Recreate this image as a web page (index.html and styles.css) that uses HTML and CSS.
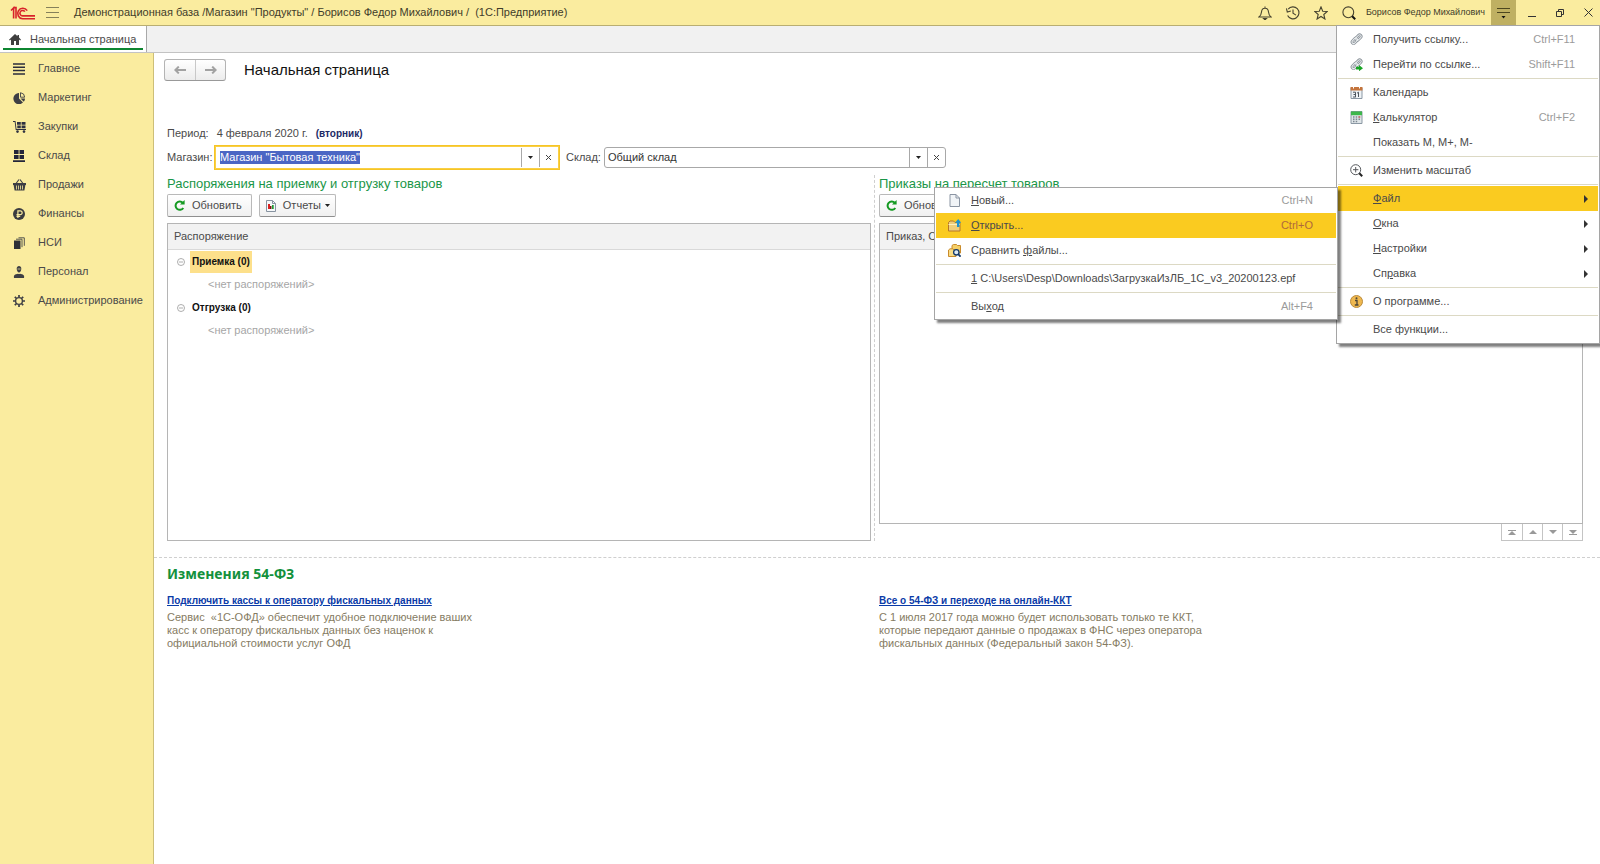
FILE: index.html
```html
<!DOCTYPE html>
<html lang="ru">
<head>
<meta charset="utf-8">
<title>Начальная страница</title>
<link rel="stylesheet" href="styles.css">
</head>
<body>
<div class="app">
  <header class="titlebar">
    <svg class="logo" viewBox="0 0 26 14" width="26" height="14" fill="none" stroke="#d8232a" stroke-width="1.6"><path d="M1 4.5 3.6 2v10.5M3.2 1.6H6v10.9"/><path d="M17.2 4.6A5.2 5.2 0 1 0 12.600 12.700H25"/><path d="M14.800 5.600A2.700 2.700 0 1 0 12.700 9.900H25"/></svg>
    <button class="tbtn burger" type="button" aria-label="Главное меню"><svg viewBox="0 0 13 11" width="13" height="11" stroke="#85805a" stroke-width="1"><path d="M0 .5h13M0 5.500h13M0 10.500h13"/></svg></button>
    <h1 class="app-title">Демонстрационная база /Магазин "Продукты" / Борисов Федор Михайлович /&nbsp; (1С:Предприятие)</h1>
    <div class="tools">
      <button class="tbtn" type="button" aria-label="Уведомления"><svg viewBox="0 0 14 14" width="14" height="14" fill="none" stroke="#46432f" stroke-width="1.1"><path d="M1 11c2-1.500 2.300-3 2.500-5C3.700 3.500 5 2.200 7 2.200s3.300 1.300 3.500 3.800c.2 2 .5 3.500 2.500 5zM7 .4v1.600"/><path d="M5.600 12.500h2.800L7 13.800z" fill="#222"/></svg></button>
      <button class="tbtn" type="button" aria-label="История"><svg viewBox="0 0 14 14" width="14" height="14" fill="none" stroke="#46432f" stroke-width="1.1"><path d="M2.200 3.200A6 6 0 1 1 1.600 9.500"/><path d="M.4 2.300 1.300 6l3.500-1M7 3.500v3.800l3 1.800"/></svg></button>
      <button class="tbtn" type="button" aria-label="Избранное"><svg viewBox="0 0 14 14" width="14" height="14" fill="none" stroke="#46432f" stroke-width="1.100"><path d="M7 .9 8.700 5.200l4.600.3-3.500 3 1.100 4.500L7 10.500 3.100 13l1.100-4.500-3.500-3 4.600-.3z"/></svg></button>
      <button class="tbtn" type="button" aria-label="Поиск"><svg viewBox="0 0 14 14" width="14" height="14" fill="none" stroke="#46432f" stroke-width="1.100"><circle cx="6.300" cy="6.300" r="5.400"/><path d="m10.200 10.200 3 3" stroke="#111" stroke-width="2"/></svg></button>
    </div>
    <span class="user">Борисов Федор Михайлович</span>
    <button class="tbtn service" type="button" aria-label="Сервис и настройки"><svg viewBox="0 0 13 12" width="13" height="12"><path d="M0 1.500h13M0 5.500h13" stroke="#4c461f"/><path d="M4.500 9h4l-2 2.500z" fill="#111"/></svg></button>
    <div class="winbtns">
      <button class="tbtn" type="button" aria-label="Свернуть"><svg viewBox="0 0 8 8" width="8" height="8"><path d="M0 7.500h8" stroke="#333"/></svg></button>
      <button class="tbtn" type="button" aria-label="Восстановить"><svg viewBox="0 0 8 8" width="8" height="8" fill="none" stroke="#333"><path d="M.5 2.500h5v5h-5zM2.500 2.500v-2h5v5h-2"/></svg></button>
      <button class="tbtn" type="button" aria-label="Закрыть"><svg viewBox="0 0 9 9" width="9" height="9" stroke="#333"><path d="m.5.5 8 8M8.500.5l-8 8"/></svg></button>
    </div>
  </header>

  <nav class="tabs">
    <a class="tab" href="#"><svg viewBox="0 0 12 11" width="12" height="11" fill="#3f3f3f"><path d="M6 0 0 5.700l.8.800L2 5.500V11h3V7h2v4h3V5.500l1.200 1 .8-.8L10 3.600V1H8.500v1.200z"/></svg><span class="tab-label">Начальная страница</span></a>
  </nav>

  <div class="body">
    <nav class="sidebar">
      <a class="side" href="#"><svg viewBox="0 0 12 12" width="12" height="12" stroke="#2b2d3c" stroke-width="1.500"><path d="M0 1h12M0 4.300h12M0 7.600h12M0 11h12"/></svg>Главное</a>
      <a class="side" href="#"><svg viewBox="0 0 12 12" width="12" height="12" fill="#3e3f44"><path d="M6 1v5.500l4 4A5.600 5.600 0 1 1 6 1z"/><path d="M7.500.7v4.500h4.200A4.700 4.700 0 0 0 7.500.7z" fill="none" stroke="#3e3f44" stroke-width=".9"/><path d="M7.500 6.500H12c0 1.300-.4 2.300-1.200 3.300z"/></svg>Маркетинг</a>
      <a class="side" href="#"><svg viewBox="0 0 13 12" width="13" height="12" fill="#2f3140"><path d="M0 0h2.500l1 8H13v1H2.700L1.700 1H0zM4 1h3.800v2.800H4zM8.600 1h3.900v2.800H8.600zM4.300 4.600h3.500v2.700H4.300zM8.600 4.600h3.900v2.700H8.600z"/><circle cx="4.500" cy="10.600" r="1.300"/><circle cx="11" cy="10.600" r="1.300"/></svg>Закупки</a>
      <a class="side" href="#"><svg viewBox="0 0 12 12" width="12" height="12" fill="#24263a"><path d="M1 0h4.600v4H1zM6.500 0H11v4H6.500zM1 5h4.600v4H1zM6.500 5H11v4H6.500zM0 10.300h12V12H0z"/></svg>Склад</a>
      <a class="side" href="#"><svg viewBox="0 0 13 12" width="13" height="12" fill="#3e3f44"><path d="M0 4h13v2h-.6l-1 5.500H1.600L.6 6H0z"/><path d="m3 4.500 3-4M10 4.500l-3-4" stroke="#3e3f44" stroke-width="1.100"/><path d="M3.500 6.500v4M5.500 6.500v4M7.500 6.500v4M9.500 6.500v4" stroke="#faec9f" stroke-width=".8"/></svg>Продажи</a>
      <a class="side" href="#"><svg viewBox="0 0 12 12" width="12" height="12"><circle cx="6" cy="6" r="6" fill="#3b3c40"/><path d="M4.900 10V2.800h2.300a1.900 1.900 0 0 1 0 3.900H3.500M3.500 8.400h3.700" fill="none" stroke="#faec9f" stroke-width="1.200"/></svg>Финансы</a>
      <a class="side" href="#"><svg viewBox="0 0 12 12" width="12" height="12"><path d="M1 3.500h6.500V12H1z" fill="#2e3036"/><path d="M3 2.200h6v8M5.500.8h5.800v8" fill="none" stroke="#55564f" stroke-width="1"/></svg>НСИ</a>
      <a class="side" href="#"><svg viewBox="0 0 12 12" width="12" height="12" fill="#3e3f44"><path d="M1 12c-.6-3 1-3.800 4-4.200h2c3 .4 4.600 1.200 4 4.200z"/><path d="M3.700 2.700C3.700.9 4.700 0 6 0s2.300.9 2.300 2.700S7.300 6.600 6 6.600 3.700 4.500 3.700 2.700z"/><path d="M4.500 3h3M4.800 7.500h2.400" stroke="#faec9f" stroke-width=".7"/></svg>Персонал</a>
      <a class="side" href="#"><svg viewBox="0 0 12 12" width="12" height="12" fill="none" stroke="#3e3f44"><circle cx="6" cy="6" r="3.400" stroke-width="1.400"/><path d="M6 0v2M6 10v2M0 6h2M10 6h2M1.800 1.800l1.400 1.400M8.800 8.800l1.400 1.400M1.800 10.200l1.400-1.400M8.800 3.200l1.400-1.400" stroke-width="1.700"/></svg>Администрирование</a>
    </nav>

    <main class="main">
      <div class="page-head">
        <div class="history">
          <button class="hbtn" type="button" aria-label="Назад"><svg viewBox="0 0 12 8" width="12" height="8" fill="none" stroke="#a2a2a2" stroke-width="2"><path d="M12 4H1.500M4.800.6 1.400 4l3.400 3.400"/></svg></button>
          <button class="hbtn" type="button" aria-label="Вперед"><svg viewBox="0 0 12 8" width="12" height="8" fill="none" stroke="#a2a2a2" stroke-width="2"><path d="M0 4h10.500M7.200.6 10.600 4 7.200 7.400"/></svg></button>
        </div>
        <h2 class="page-title">Начальная страница</h2>
      </div>

      <div class="period"><span class="period-label">Период:</span><span>4 февраля 2020 г.</span><strong class="weekday">(вторник)</strong></div>

      <form class="filters">
        <label class="flabel" for="store">Магазин:</label>
        <div class="combo active">
          <input class="combo-input" id="store" type="text" value="Магазин &quot;Бытовая техника&quot;">
          <button class="cbtn" type="button" aria-label="Выбрать магазин"><svg viewBox="0 0 5 3" width="5" height="3"><path d="M0 0h5L2.500 3z" fill="#222"/></svg></button>
          <button class="cbtn" type="button" aria-label="Очистить магазин"><svg viewBox="0 0 5 5" width="5" height="5" stroke="#444"><path d="m0 0 5 5M5 0 0 5"/></svg></button>
        </div>
        <label class="flabel second" for="warehouse">Склад:</label>
        <div class="combo">
          <input class="combo-input" id="warehouse" type="text" value="Общий склад">
          <button class="cbtn" type="button" aria-label="Выбрать склад"><svg viewBox="0 0 5 3" width="5" height="3"><path d="M0 0h5L2.500 3z" fill="#222"/></svg></button>
          <button class="cbtn" type="button" aria-label="Очистить склад"><svg viewBox="0 0 5 5" width="5" height="5" stroke="#444"><path d="m0 0 5 5M5 0 0 5"/></svg></button>
        </div>
      </form>

      <div class="panels">
        <section class="panel">
          <h3 class="panel-title">Распоряжения на приемку и отгрузку товаров</h3>
          <div class="toolbar">
            <button class="btn" type="button"><svg viewBox="0 0 11 11" width="11" height="11" fill="none" stroke="#159a22" stroke-width="2"><path d="M8.800 2.700A4.200 4.200 0 1 0 9.300 8"/><path d="M10.600 0v4.600H6z" fill="#159a22" stroke="none"/></svg>Обновить</button>
            <button class="btn reports" type="button"><svg viewBox="0 0 10 12" width="10" height="12"><path d="M.5.5h6l3 3v8h-9z" fill="#f6f8fa" stroke="#8793a0"/><path d="M6.500.5v3h3" fill="none" stroke="#8793a0"/><path d="M2 4h2v5H2z" fill="#d82020"/><path d="M4 6h1.500v3H4z" fill="#7a1a10"/><path d="M6 5h1.700v4H6z" fill="#1e9c35"/></svg>Отчеты<svg class="caret" viewBox="0 0 5 3" width="5" height="3"><path d="M0 0h5L2.500 3z" fill="#222"/></svg></button>
          </div>
          <div class="grid">
            <div class="grid-head">Распоряжение</div>
            <ul class="tree">
              <li class="node"><svg viewBox="0 0 8 8" width="8" height="8" fill="none" stroke="#999" stroke-width=".8"><circle cx="4" cy="4" r="3.500"/><path d="M2 4h4"/></svg><strong class="group current">Приемка (0)</strong></li>
              <li class="leaf">&lt;нет распоряжений&gt;</li>
              <li class="node"><svg viewBox="0 0 8 8" width="8" height="8" fill="none" stroke="#999" stroke-width=".8"><circle cx="4" cy="4" r="3.500"/><path d="M2 4h4"/></svg><strong class="group">Отгрузка (0)</strong></li>
              <li class="leaf">&lt;нет распоряжений&gt;</li>
            </ul>
          </div>
        </section>
        <section class="panel split">
          <h3 class="panel-title">Приказы на пересчет товаров</h3>
          <div class="toolbar">
            <button class="btn" type="button"><svg viewBox="0 0 11 11" width="11" height="11" fill="none" stroke="#159a22" stroke-width="2"><path d="M8.800 2.700A4.200 4.200 0 1 0 9.300 8"/><path d="M10.600 0v4.600H6z" fill="#159a22" stroke="none"/></svg>Обновить</button>
          </div>
          <div class="grid orders">
            <div class="grid-head">Приказ, Статус</div>
          </div>
          <div class="pager">
            <button class="pbtn" type="button" aria-label="В начало"><svg viewBox="0 0 8 5" width="8" height="5" fill="#999"><path d="M0 0h8v1H0zM4 1l4 4H0z"/></svg></button>
            <button class="pbtn" type="button" aria-label="Вверх"><svg viewBox="0 0 8 4" width="8" height="4" fill="#999"><path d="m4 0 4 4H0z"/></svg></button>
            <button class="pbtn" type="button" aria-label="Вниз"><svg viewBox="0 0 8 4" width="8" height="4" fill="#999"><path d="M0 0h8L4 4z"/></svg></button>
            <button class="pbtn" type="button" aria-label="В конец"><svg viewBox="0 0 8 5" width="8" height="5" fill="#999"><path d="M0 0h8L4 4zM0 4h8v1H0z"/></svg></button>
          </div>
        </section>
      </div>

      <section class="news">
        <h3 class="news-title">Изменения 54-ФЗ</h3>
        <div class="news-grid">
          <article class="article">
            <a class="news-link" href="#">Подключить кассы к оператору фискальных данных</a>
            <p class="text">Сервис&nbsp; «1С-ОФД» обеспечит удобное подключение ваших<br>касс к оператору фискальных данных без наценок к<br>официальной стоимости услуг ОФД</p>
          </article>
          <article class="article">
            <a class="news-link" href="#">Все о 54-ФЗ и переходе на онлайн-ККТ</a>
            <p class="text">С 1 июля 2017 года можно будет использовать только те ККТ,<br>которые передают данные о продажах в ФНС через оператора<br>фискальных данных (Федеральный закон 54-ФЗ).</p>
          </article>
        </div>
      </section>
    </main>
  </div>

  <div class="menu main-menu">
    <button class="item" type="button"><svg class="ico" viewBox="0 0 13 13" width="13" height="13" fill="none"><g stroke="#8a9299" stroke-width="2.600"><rect x="1.500" y="6.200" width="6.500" height="3.200" rx="1.600" transform="rotate(-45 4.700 7.800)"/><rect x="5.200" y="3" width="6.500" height="3.200" rx="1.600" transform="rotate(-45 8.400 4.600)"/></g><g stroke="#eceff1"><rect x="1.500" y="6.200" width="6.500" height="3.200" rx="1.600" transform="rotate(-45 4.700 7.800)"/><rect x="5.200" y="3" width="6.500" height="3.200" rx="1.600" transform="rotate(-45 8.400 4.600)"/></g></svg><span class="name">Получить ссылку...</span><span class="key">Ctrl+F11</span></button>
    <button class="item" type="button"><svg class="ico" viewBox="0 0 13 13" width="13" height="13" fill="none"><g stroke="#8a9299" stroke-width="2.600"><rect x="1.500" y="6.200" width="6.500" height="3.200" rx="1.600" transform="rotate(-45 4.700 7.800)"/><rect x="5.200" y="3" width="6.500" height="3.200" rx="1.600" transform="rotate(-45 8.400 4.600)"/></g><g stroke="#eceff1"><rect x="1.500" y="6.200" width="6.500" height="3.200" rx="1.600" transform="rotate(-45 4.700 7.800)"/><rect x="5.200" y="3" width="6.500" height="3.200" rx="1.600" transform="rotate(-45 8.400 4.600)"/></g><path d="M6 8.700h3V7l4 3.200-4 3V11.500H6z" fill="#18a525"/></svg><span class="name">Перейти по ссылке...</span><span class="key">Shift+F11</span></button>
    <hr class="sep">
    <button class="item" type="button"><svg class="ico" viewBox="0 0 13 13" width="13" height="13"><path d="M1 2h11v10.500H1z" fill="#eef2f5" stroke="#8b98a4"/><path d="M.5 1h12v3.500H.5z" fill="#c4743c"/><path d="M3.500 0v2.500M9.500 0v2.500" stroke="#fff"/><path d="M3 6.200h2.500V11M3.500 8.500h2M3 11h2.800M8.500 11V6.200L7 7.200" fill="none" stroke="#4e565e"/></svg><span class="name">Кален<u>д</u>арь</span></button>
    <button class="item" type="button"><svg class="ico" viewBox="0 0 12 13" width="13" height="13"><path d="M.5.5h11v12H.5z" fill="#dfe5e8" stroke="#8b98a4"/><path d="M.5.5h11v3.700H.5z" fill="#3db74b"/><path d="M2.500 6h1.500M5.200 6h1.500M8 6h1.500M2.500 8.300h1.500M5.200 8.300h1.500M8 8.300h1.500M2.500 10.600h1.500M5.200 10.600h1.500" stroke="#7d8892" stroke-width="1.500"/><path d="M8 6h1.800" stroke="#d66" stroke-width="1.500"/></svg><span class="name"><u>К</u>алькулятор</span><span class="key">Ctrl+F2</span></button>
    <button class="item" type="button"><span class="ico"></span><span class="name">Показать М, М+, М-</span></button>
    <hr class="sep">
    <button class="item" type="button"><svg class="ico" viewBox="0 0 13 13" width="13" height="13" fill="none" stroke="#55585c"><circle cx="5.700" cy="5.700" r="5"/><path d="M3 5.700h5.400M5.700 3v5.400"/><path d="m9.300 9.300 2.900 2.900" stroke="#222" stroke-width="2"/></svg><span class="name">Изменить масштаб</span></button>
    <hr class="sep">
    <button class="item on" type="button"><span class="ico"></span><span class="name"><u>Ф</u>айл</span><svg class="arrow" viewBox="0 0 4 8" width="4" height="8"><path d="m0 0 4 4-4 4z" fill="#333"/></svg></button>
    <button class="item" type="button"><span class="ico"></span><span class="name"><u>О</u>кна</span><svg class="arrow" viewBox="0 0 4 8" width="4" height="8"><path d="m0 0 4 4-4 4z" fill="#333"/></svg></button>
    <button class="item" type="button"><span class="ico"></span><span class="name"><u>Н</u>астройки</span><svg class="arrow" viewBox="0 0 4 8" width="4" height="8"><path d="m0 0 4 4-4 4z" fill="#333"/></svg></button>
    <button class="item" type="button"><span class="ico"></span><span class="name">Сп<u>р</u>авка</span><svg class="arrow" viewBox="0 0 4 8" width="4" height="8"><path d="m0 0 4 4-4 4z" fill="#333"/></svg></button>
    <hr class="sep">
    <button class="item" type="button"><svg class="ico" viewBox="0 0 13 13" width="13" height="13"><circle cx="6.500" cy="6.500" r="6" fill="#efb84f" stroke="#b98a3c"/><path d="M5 5.500h2V10M4.800 10h3.700" fill="none" stroke="#4c4638" stroke-width="1.300"/><circle cx="6.500" cy="3.300" r="1" fill="#4c4638"/></svg><span class="name">О программе...</span></button>
    <hr class="sep">
    <button class="item" type="button"><span class="ico"></span><span class="name">Все функции...</span></button>
  </div>

  <div class="menu sub-menu">
    <button class="item" type="button"><svg class="ico" viewBox="0 0 13 13" width="13" height="13"><path d="M2 .5h6L11.500 4v8.500H2z" fill="#f1f4f7" stroke="#8b95a3"/><path d="M8 .5V4h3.500" fill="none" stroke="#8b95a3"/></svg><span class="name"><u>Н</u>овый...</span><span class="key">Ctrl+N</span></button>
    <button class="item on" type="button"><svg class="ico" viewBox="0 0 13 13" width="13" height="13"><path d="M.5 3.500 2 2h3.500L7 3.500h5V12H.5z" fill="#f0cf7a" stroke="#b5762a"/><path d="M.5 5.500H12" stroke="#fdf0c0"/><path d="M9 8V3.700H7L10.200 0l3 3.700h-1.800V8z" fill="#1e93cf"/></svg><span class="name"><u>О</u>ткрыть...</span><span class="key">Ctrl+O</span></button>
    <button class="item" type="button"><svg class="ico" viewBox="0 0 13 13" width="13" height="13"><path d="M4 5V1.500L5.500.5h3l1 1h3V9H4z" fill="#f5cf67" stroke="#c98b2b"/><path d="M.5 12.500V6L2 4.800h3L6 6h2v6.500z" fill="#f9dc85" stroke="#c98b2b"/><circle cx="8.300" cy="8.300" r="2.700" fill="#dbe9f5" stroke="#143a6b" stroke-width="1.300"/><path d="m10.200 10.200 2.400 2.500" stroke="#143a6b" stroke-width="1.800"/></svg><span class="name">Сравнить <u>ф</u>айлы...</span></button>
    <hr class="sep">
    <button class="item" type="button"><span class="ico"></span><span class="name"><u>1</u> C:\Users\Desp\Downloads\ЗагрузкаИзЛБ_1С_v3_20200123.epf</span></button>
    <hr class="sep">
    <button class="item" type="button"><span class="ico"></span><span class="name">Вы<u>х</u>од</span><span class="key">Alt+F4</span></button>
  </div>
</div>
<script src="app.js"></script>
</body>
</html>
```

FILE: app.js
```js
const store = document.getElementById("store");
store.focus();
store.select();
```

FILE: styles.css
```css
* { box-sizing: border-box; }
body {
  margin: 0;
  background: #fff;
  color: #4a4a4a;
  font: 11px/13px "Liberation Sans", Arial, sans-serif;
}
button, input { font: inherit; color: inherit; }
button { margin: 0; padding: 0; border: 0; background: none; cursor: default; }
svg { display: block; flex: none; }
a { color: inherit; text-decoration: none; }
h1, h2, h3, p, ul { margin: 0; padding: 0; font-weight: normal; }

.app { position: relative; display: flex; flex-direction: column; min-height: 100vh; }

.titlebar {
  display: flex;
  align-items: center;
  height: 26px;
  padding-left: 10px;
  background: #faec9f;
  border-bottom: 1px solid #b9ae72;
}
.tbtn { display: flex; align-items: center; justify-content: center; height: 25px; }
.burger { width: 13px; margin: 0 15px 0 10px; }
.app-title { flex: 1; font-size: 11px; color: #3f3c2a; white-space: nowrap; }
.tools { display: flex; gap: 14px; margin-right: 10px; }
.user { font-size: 9px; color: #3f3c2a; white-space: nowrap; }
.service { width: 25px; margin-left: 6px; background: #bfb062; }
.winbtns { display: flex; gap: 20px; padding: 0 7px 0 12px; }

.tabs {
  display: flex;
  height: 27px;
  background: #f1f1f1;
  border-bottom: 1px solid #c3c3c3;
}
.tab {
  display: flex;
  align-items: center;
  gap: 9px;
  padding: 0 10px 0 9px;
  background: linear-gradient(#0d8530, #0d8530) 3px 22px / calc(100% - 6px) 2px no-repeat #fff;
  border-right: 1px solid #a9a9a9;
}

.body { flex: 1; display: flex; }
.sidebar {
  flex: none;
  width: 154px;
  padding-top: 1px;
  background: #faec9f;
  border-right: 1px solid #cdbf78;
}
.side { display: grid; grid-template-columns: 25px 1fr; align-items: center; height: 29px; padding-left: 13px; }

.main { flex: 1; min-width: 0; padding-top: 6px; }
.page-head { display: flex; align-items: center; gap: 18px; padding-left: 10px; }
.history {
  display: flex;
  border: 1px solid #b4b4b4;
  border-bottom-color: #999;
  border-radius: 3px;
  background: linear-gradient(#fff, #ececec);
}
.hbtn { display: flex; align-items: center; justify-content: center; width: 30px; height: 20px; }
.hbtn + .hbtn { border-left: 1px solid #c8c8c8; }
.page-title { font-size: 15px; line-height: 22px; color: #111; }

.period { display: flex; gap: 8px; padding: 46px 13px 0; }
.weekday { color: #1c2a66; font-size: 10px; }
.filters { display: flex; align-items: center; padding: 5px 13px 0; }
.flabel { width: 47px; }
.flabel.second { width: 38px; margin-left: 6px; }
.combo {
  display: flex;
  width: 342px;
  height: 21px;
  border: 1px solid #a8a8a8;
  border-radius: 3px;
}
.combo-input { flex: 1; min-width: 0; padding: 0 3px; border: 0; outline: 0; background: none; color: #333; }
.combo-input::selection { background: #4b66c4; color: #fff; }
.cbtn { display: flex; align-items: center; justify-content: center; width: 18px; border-left: 1px solid #a8a8a8; }
.combo.active { width: 346px; height: 25px; padding: 2px; border: 1px solid #f6c526; border-radius: 0; box-shadow: inset 0 0 0 1px #f9cf45; }

.panels { display: grid; grid-template-columns: 1fr 1fr; gap: 8px; padding: 5px 17px 16px 13px; border-bottom: 1px dashed #cfcfcf; }
.panel { display: flex; flex-direction: column; min-width: 0; }
.panel.split { position: relative; }
.panel.split::before { content: ""; position: absolute; top: 0; bottom: 0; left: -5px; border-left: 1px dashed #cfcfcf; }
.panel-title { font-size: 13px; line-height: 18px; color: #1a9648; }
.toolbar { display: flex; gap: 7px; padding: 1px 0 6px; }
.btn {
  display: flex;
  align-items: center;
  gap: 7px;
  height: 23px;
  padding: 0 9px 0 6px;
  border: 1px solid #b9b9b9;
  border-bottom-color: #8f8f8f;
  border-radius: 2px;
  background: linear-gradient(#fff, #f0f0f0);
}
.reports { padding-right: 5px; }
.caret { margin-left: -3px; }
.grid { min-height: 318px; border: 1px solid #b5b5b5; }
.orders { min-height: 301px; }
.grid-head { height: 26px; padding: 0 6px; line-height: 25px; background: #f2f2f2; border-bottom: 1px solid #d9d9d9; }
.tree { list-style: none; }
.node { display: flex; align-items: center; gap: 5px; height: 23px; padding-left: 9px; }
.group { padding: 0 2px; font-size: 10px; line-height: 22px; color: #111; }
.group.current { background: #fde08b; }
.leaf { height: 23px; padding-left: 40px; line-height: 23px; color: #a6a6a6; }
.pager { display: flex; align-self: flex-end; border: solid #c4c4c4; border-width: 0 1px 1px; }
.pbtn { display: flex; align-items: center; justify-content: center; width: 20px; height: 16px; }
.pbtn + .pbtn { border-left: 1px solid #c4c4c4; }

.news { padding: 6px 17px 0 13px; }
.news-title { font: bold 14px/20px "Noto Sans", "Open Sans", sans-serif; color: #13913c; }
.news-grid { display: grid; grid-template-columns: 1fr 1fr; gap: 8px; padding-top: 10px; }
.news-link { display: inline-block; font-size: 10px; font-weight: bold; color: #0b3ba8; text-decoration: underline; }
.text { padding-top: 4px; color: #857b62; }

.menu { position: absolute; z-index: 1; background: #fff; border: 1px solid #a5a5a5; padding: 0 1px; box-shadow: 3px 3px 2px rgba(0, 0, 0, .5); }
.main-menu { top: 25px; right: 0; width: 264px; padding-top: 1px; padding-bottom: 1px; }
.sub-menu { top: 187px; right: 262px; width: 404px; z-index: 2; }
.item { display: flex; align-items: center; width: 100%; height: 25px; padding-left: 12px; text-align: left; white-space: nowrap; }
.item.on { background: #facb20; }
.ico { flex: none; width: 13px; margin-right: 10px; }
.name { flex: 1; }
.key { margin-right: 23px; color: #9b9b9b; }
.on .key { color: #b0693c; }
.arrow { margin-right: 10px; }
.sep { height: 3px; margin: 0; border: solid #fff; border-width: 1px 0; background: #dcd9c4; }
```
